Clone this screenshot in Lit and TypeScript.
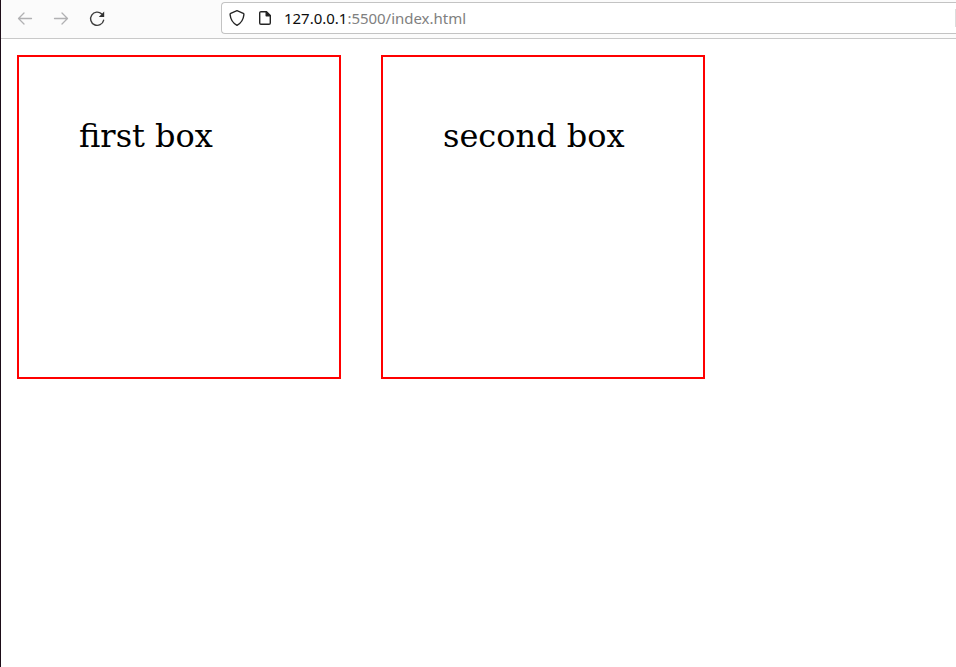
import { LitElement, html, css } from "lit";
import { customElement } from "lit/decorators.js";

@customElement("browser-toolbar")
class BrowserToolbar extends LitElement {
  static styles = css`
    :host {
      display: flex;
      box-sizing: border-box;
      height: 39px;
      padding: 2px 0 4px 14px;
      background: #fbfbfb;
      border-bottom: 1px solid #c9c9c9;
    }
    svg { display: block; flex: none; fill: none; stroke-linecap: round; stroke-linejoin: round; }
    .nav { display: flex; gap: 16px; align-items: center; width: 206px; flex: none; }
    .nav svg { stroke: #3c3c3c; stroke-width: 1.4; }
    .nav svg.off { stroke: #b1b1b3; stroke-width: 1.3; }
    .nav svg .head { fill: #303030; stroke: none; }
    .address {
      flex: 1;
      display: flex;
      align-items: center;
      box-sizing: border-box;
      height: 32px;
      padding-left: 6px;
      background: #fff;
      border: 1px solid #c3c3c3;
      border-right: 0;
      border-radius: 4px 0 0 4px;
    }
    .address svg { stroke: #242424; stroke-width: 1.4; margin-right: 10px; }
    .address svg .fold { fill: #15141a; }
    .url {
      font: 15px/20px "Noto Sans", "Open Sans", sans-serif;
      color: #808080;
      letter-spacing: -0.02px;
      white-space: nowrap;
    }
    .host { color: #0c0c0d; }
    .divider { width: 1px; height: 18px; margin-left: auto; background: #dcdcdc; }
  `;

  render() {
    return html`
      <div class="nav">
        <svg class="off" width="20" height="20" viewBox="0 0 20 20"><path d="M16.5 10.5H3.5M9 5L3.5 10.5L9 16" /></svg>
        <svg class="off" width="20" height="20" viewBox="0 0 20 20"><path d="M3.5 10.5H16.5M11 5L16.5 10.5L11 16" /></svg>
        <svg width="20" height="20" viewBox="0 0 20 20">
          <path d="M14.8 6A6.6 6.6 0 1 0 16.6 12.3" />
          <path class="head" d="M17.2 3.4V9H11.8Z" />
        </svg>
      </div>
      <div class="address">
        <svg width="18" height="18" viewBox="0 0 18 18">
          <path d="M9 1.7L15.3 4.4C15.9 4.7 16 5.2 15.9 5.8C15.4 10.6 13.6 13.9 9 16.4C4.4 13.9 2.6 10.6 2.1 5.8C2 5.2 2.1 4.7 2.7 4.4Z" />
        </svg>
        <svg width="18" height="18" viewBox="0 0 18 18">
          <path d="M10.5 2.7H5A1.3 1.3 0 0 0 3.7 4V14A1.3 1.3 0 0 0 5 15.3H13A1.3 1.3 0 0 0 14.3 14V6.5Z" />
          <path class="fold" d="M10.2 3V6.7H14Z" />
        </svg>
        <div class="url"><span class="host">127.0.0.1</span>:5500/index.html</div>
        <div class="divider"></div>
      </div>
    `;
  }
}

@customElement("app-root")
class AppRoot extends LitElement {
  static styles = css`
    :host {
      display: flex;
      flex-direction: column;
      box-sizing: border-box;
      height: 100vh;
      overflow: hidden;
      background: #fff;
      border-left: 1px solid #1d0d18;
    }
    browser-toolbar { flex: none; }
    .page { display: flex; gap: 40px; padding: 16px; }
    .box {
      width: 200px;
      height: 200px;
      padding: 60px;
      border: 2px solid #f00;
      font: 32px "DejaVu Serif", serif;
      color: #000;
    }
  `;

  render() {
    return html`
      <browser-toolbar></browser-toolbar>
      <main class="page">
        ${["first box", "second box"].map((label) => html`<div class="box">${label}</div>`)}
      </main>
    `;
  }
}
